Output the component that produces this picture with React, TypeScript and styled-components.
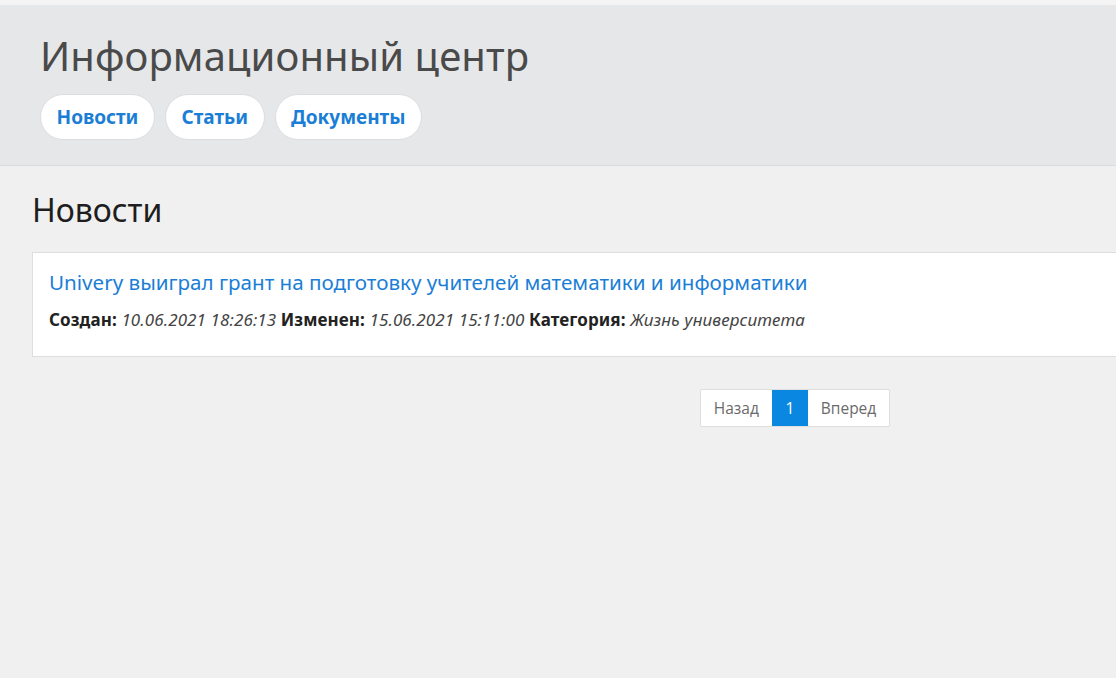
import React from "react";
import styled, { createGlobalStyle } from "styled-components";

const Global = createGlobalStyle`
  html, body { margin: 0; padding: 0; overflow: hidden; }
  body {
    background: #f0f0f0;
    font-family: "Noto Sans", "Open Sans", sans-serif;
    color: #222;
  }
`;

const Page = styled.div`
  min-height: 678px;
  border-top: 5px solid #f4f4f4;
`;

const Header = styled.header`
  background: #e6e7e9;
  border-bottom: 1px solid #dadbdd;
  padding: 26px 40px 24px;
  height: 161px;
  box-sizing: border-box;
`;

const Title = styled.h1`
  margin: 0;
  font-size: 40px;
  font-weight: 400;
  line-height: 50px;
  color: #4a4a4a;
  letter-spacing: 0.1px;
`;

const Nav = styled.nav`
  display: flex;
  gap: 10px;
  margin-top: 13px;
`;

const Pill = styled.a`
  display: flex;
  align-items: center;
  height: 46px;
  box-sizing: border-box;
  padding: 0 15.5px;
  border-radius: 23px;
  background: #fff;
  border: 1px solid #dcdde0;
  color: #1b7ed6;
  font-weight: 700;
  font-size: 19px;
  text-decoration: none;
`;

const Main = styled.main`
  padding: 24px 0 0 32px;
`;

const Heading = styled.h2`
  margin: 0 0 22px;
  font-size: 32px;
  font-weight: 400;
  line-height: 40px;
  color: #1e1e1e;
`;

const Card = styled.article`
  width: 1526px;
  box-sizing: border-box;
  background: #fff;
  border: 1px solid #dedede;
  padding: 15px 16px 24px;
`;

const CardTitle = styled.a`
  display: block;
  color: #1b7ed6;
  font-size: 20.6px;
  line-height: 28px;
  text-decoration: none;
`;

const Meta = styled.div`
  margin-top: 12px;
  font-size: 17px;
  line-height: 24px;
  letter-spacing: 0.1px;
  color: #222;
`;

const Label = styled.b`
  font-weight: 700;
`;

const Value = styled.i`
  color: #444;
`;

const Pager = styled.div`
  width: 1526px;
  display: flex;
  justify-content: center;
  margin-top: 32px;
`;

const PageList = styled.div`
  display: flex;
  border: 1px solid #dedede;
  border-radius: 2px;
  background: #fff;
  height: 38px;
  box-sizing: border-box;
`;

const PageItem = styled.span<{ $active?: boolean }>`
  display: flex;
  align-items: center;
  justify-content: center;
  padding: 0 13px;
  min-width: ${(p) => (p.$active ? "36px" : "0")};
  box-sizing: border-box;
  font-size: 15.5px;
  color: ${(p) => (p.$active ? "#fff" : "#6a6a6a")};
  background: ${(p) => (p.$active ? "#0a88e1" : "transparent")};
  font-family: "Open Sans", sans-serif;
`;

export default function App() {
  return (
    <Page>
      <Global />
      <Header>
        <Title>Информационный центр</Title>
        <Nav>
          <Pill href="#">Новости</Pill>
          <Pill href="#">Статьи</Pill>
          <Pill href="#">Документы</Pill>
        </Nav>
      </Header>
      <Main>
        <Heading>Новости</Heading>
        <Card>
          <CardTitle href="#">
            Univery выиграл грант на подготовку учителей математики и информатики
          </CardTitle>
          <Meta>
            <Label>Создан:</Label> <Value>10.06.2021 18:26:13</Value>{" "}
            <Label>Изменен:</Label> <Value>15.06.2021 15:11:00</Value>{" "}
            <Label>Категория:</Label> <Value>Жизнь университета</Value>
          </Meta>
        </Card>
        <Pager>
          <PageList>
            <PageItem>Назад</PageItem>
            <PageItem $active>1</PageItem>
            <PageItem>Вперед</PageItem>
          </PageList>
        </Pager>
      </Main>
    </Page>
  );
}
